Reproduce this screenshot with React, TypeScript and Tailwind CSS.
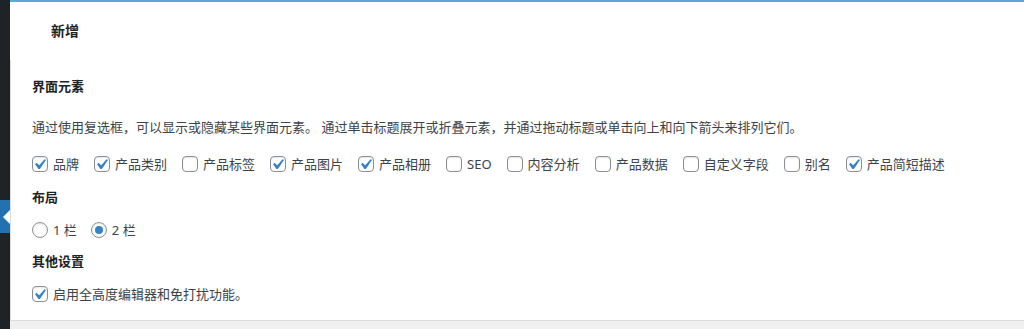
import React from "react";

const Check = ({ checked }: { checked: boolean }) => (
  <span className="relative inline-block w-4 h-4 shrink-0 rounded-[4px] border border-[#8c8f94] bg-white shadow-[inset_0_1px_2px_rgba(0,0,0,0.1)]">
    {checked && (
      <svg
        viewBox="0 0 20 20"
        className="absolute top-[-3px] left-[-4px] w-[21px] h-[21px]"
      >
        <path
          d="M14.83 4.89l1.34.94-5.81 8.38H9.02L5.78 9.67l1.34-1.25 2.57 2.4z"
          fill="#3582c4"
        />
      </svg>
    )}
  </span>
);

const Radio = ({ checked }: { checked: boolean }) => (
  <span className="inline-flex w-4 h-4 shrink-0 items-center justify-center rounded-full border border-[#8c8f94] bg-white shadow-[inset_0_1px_2px_rgba(0,0,0,0.1)]">
    {checked && <span className="block w-2 h-2 rounded-full bg-[#3582c4]" />}
  </span>
);

const items: [string, boolean][] = [
  ["品牌", true],
  ["产品类别", true],
  ["产品标签", false],
  ["产品图片", true],
  ["产品相册", true],
  ["SEO", false],
  ["内容分析", false],
  ["产品数据", false],
  ["自定义字段", false],
  ["别名", false],
  ["产品简短描述", true],
];

export default function App() {
  return (
    <div className="flex h-[329px] w-full overflow-hidden bg-white font-['Noto_Sans','Noto_Sans_CJK_SC',sans-serif] text-[13px] leading-[20px] text-[#3c434a]">
      <div className="flex w-[10px] shrink-0 flex-col bg-[#1d2327]">
        <div className="h-[200px]" />
        <div className="flex h-[33px] items-center justify-end bg-[#2271b1]">
          <div className="h-0 w-0 border-y-[7px] border-r-[7px] border-y-transparent border-r-white" />
        </div>
      </div>
      <div className="flex flex-1 flex-col border-t-2 border-[#5ba8d8]">
        <div className="h-[58px] shrink-0 pl-[41px] pt-[19px]">
          <div className="text-[14px] font-semibold text-[#1d2327]">新增</div>
        </div>
        <div className="flex h-[260px] shrink-0 flex-col border-l border-[#dcdcde] pl-[21px] pt-[16px]">
          <div className="font-semibold text-[#1d2327]">界面元素</div>
          <p className="mt-[21px]">
            通过使用复选框，可以显示或隐藏某些界面元素。 通过单击标题展开或折叠元素，并通过拖动标题或单击向上和向下箭头来排列它们。
          </p>
          <div className="mt-[17px] flex items-center gap-x-[15px]">
            {items.map(([label, c]) => (
              <label key={label} className="inline-flex items-center gap-[5px]">
                <Check checked={c} />
                <span>{label}</span>
              </label>
            ))}
          </div>
          <div className="mt-[13px] font-semibold text-[#1d2327]">布局</div>
          <div className="mt-[13px] flex items-center gap-x-[14px]">
            <label className="inline-flex items-center gap-[5px]">
              <Radio checked={false} />
              <span>1 栏</span>
            </label>
            <label className="inline-flex items-center gap-[5px]">
              <Radio checked={true} />
              <span>2 栏</span>
            </label>
          </div>
          <div className="mt-[11px] font-semibold text-[#1d2327]">其他设置</div>
          <div className="mt-[13px] flex items-center">
            <label className="inline-flex items-center gap-[5px]">
              <Check checked={true} />
              <span>启用全高度编辑器和免打扰功能。</span>
            </label>
          </div>
        </div>
        <div className="flex-1 border-t border-[#dcdcde] bg-[#f0f0f1]" />
      </div>
    </div>
  );
}
